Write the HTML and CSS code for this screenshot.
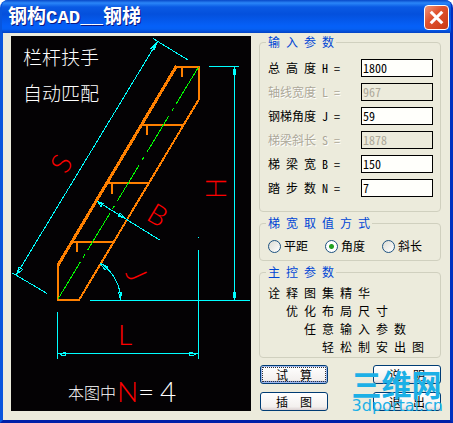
FILE: index.html
```html
<!DOCTYPE html>
<html lang="zh-CN">
<head>
<meta charset="utf-8">
<title>钢构CAD__钢梯</title>
<link rel="stylesheet" href="styles.css">
</head>
<body>
<main class="window">
  <header class="titlebar">
    <h1 class="title">钢构CAD__钢梯</h1>
    <button class="close" type="button" aria-label="关闭">
      <svg viewBox="0 0 22 22" aria-hidden="true"><path d="M5.500 5.500 16.500 16.500M16.500 5.500 5.500 16.500"/></svg>
    </button>
  </header>
  <div class="content">
    <svg class="drawing" viewBox="11 36 240 375" role="img" aria-label="钢梯">
      <g class="steel">
        <path class="thick" d="M57.500 266 176.500 66"/>
        <path d="M176 66.500H198.500V100L79 300H57.500V266"/>
        <path d="M143 125H183M147 125V135M108 183H148M111.500 183V193.500M73 241.500H113M76.500 241.500V252M182 66V77"/>
      </g>
      <path class="axis" d="M198.500 67 58 299"/>
      <g class="dim">
        <path d="M157.500 41.500 16.500 274.500M153 38.500 188 60M12.500 273 47 293.500"/>
        <path d="M157.500 41.500 151 48.500 154 50ZM16.500 274.500 19 267.500 22.500 269.500Z"/>
        <path d="M97.500 201.500 160.500 240.500M97.500 201.500 101 206.500 103.500 203.500ZM125 218.500 118 216 120 213Z"/>
        <path d="M100 263A43 43 0 0 1 120.500 300M100 263 105 270 107.500 267ZM120.500 300 118.500 292.500H121.500Z"/>
        <path d="M90 300.500H250M209 66.500H239M234.500 66V300M233.500 69.500H235.500V74.500H233.500ZM233.500 292.500H235.500V297.500H233.500Z"/>
        <path d="M57.500 312V359M198.500 250V359M198 237.500H199M57 353.500H199M60.500 354.500 63.500 352.500H65.500V355.500H62.500ZM195.500 354.500 192.500 352.500H189.500V355.500H192.500Z"/>
      </g>
      <g class="cjk">
        <text x="23" y="65">栏杆扶手</text>
        <text x="23" y="101">自动匹配</text>
      </g>
      <g class="mark">
        <text transform="translate(66 175) rotate(-59)">S</text>
        <text transform="translate(226 199) rotate(-90)">H</text>
        <text transform="translate(145 219) rotate(31)">B</text>
        <text transform="translate(125 273) rotate(65)">J</text>
        <text x="118" y="345">L</text>
      </g>
      <text class="note" x="68" y="399">本图中</text>
      <text class="formula" x="117" y="402"><tspan class="red">N</tspan><tspan x="138">=</tspan><tspan x="160">4</tspan></text>
    </svg>

    <form class="form">
      <fieldset class="group params">
        <legend>输&ensp;入&ensp;参&ensp;数</legend>
        <div class="row"><label for="h">总&ensp;高&ensp;度&ensp;H&ensp;=</label><input id="h" type="text" value="1800"></div>
        <div class="row"><label class="off" for="l">轴线宽度&ensp;L&ensp;=</label><input id="l" type="text" value="967" disabled></div>
        <div class="row"><label for="j">钢梯角度&ensp;J&ensp;=</label><input id="j" type="text" value="59"></div>
        <div class="row"><label class="off" for="s">梯梁斜长&ensp;S&ensp;=</label><input id="s" type="text" value="1878" disabled></div>
        <div class="row"><label for="b">梯&ensp;梁&ensp;宽&ensp;B&ensp;=</label><input id="b" type="text" value="150"></div>
        <div class="row"><label for="n">踏&ensp;步&ensp;数&ensp;N&ensp;=</label><input id="n" type="text" value="7"></div>
      </fieldset>
      <fieldset class="group modes">
        <legend>梯&ensp;宽&ensp;取&ensp;值&ensp;方&ensp;式</legend>
        <div class="options">
          <label><input type="radio" name="mode">平距</label>
          <label><input type="radio" name="mode" checked>角度</label>
          <label><input type="radio" name="mode">斜长</label>
        </div>
      </fieldset>
      <fieldset class="group about">
        <legend>主&ensp;控&ensp;参&ensp;数</legend>
        <p>诠&ensp;释&ensp;图&ensp;集&ensp;精&ensp;华</p>
        <p class="in1">优&ensp;化&ensp;布&ensp;局&ensp;尺&ensp;寸</p>
        <p class="in2">任&ensp;意&ensp;输&ensp;入&ensp;参&ensp;数</p>
        <p class="in3">轻&ensp;松&ensp;制&ensp;安&ensp;出&ensp;图</p>
      </fieldset>
      <div class="actions">
        <button class="btn default" type="button">试&ensp;&ensp;算</button>
        <button class="btn" type="button">说&ensp;&ensp;明</button>
        <button class="btn" type="button">插&ensp;&ensp;图</button>
        <button class="btn" type="button">退&ensp;&ensp;出</button>
        <div class="watermark"><span class="brand">三维网</span><span class="site">3dportal.cn</span></div>
      </div>
    </form>
  </div>
</main>
</body>
</html>
```
FILE: styles.css
```css
* { box-sizing: border-box; }

body {
  margin: 0;
  background: #fff;
  color: #000;
  font: 12px/12px "Noto Sans CJK SC", sans-serif;
  font-feature-settings: "hwid";
}

.window {
  min-height: 100vh;
  display: flex;
  flex-direction: column;
  border: solid;
  border-width: 0 3px 3px;
  border-color: #0855dd #0030c0 #0020a8 #0855dd;
  border-radius: 8px 8px 0 0;
  background: #0855dd;
}

.titlebar {
  height: 33px;
  display: flex;
  align-items: center;
  justify-content: space-between;
  padding: 2px 2px 0 5px;
  margin: 0 -1px;
  border-radius: 6px 6px 0 0;
  background: linear-gradient(#0848c8 0, #2a86f8 3px, #0a5ae4 7px, #0450dc 14px, #0560f8 26px, #0560f4 29px, #0343c4 33px);
}

.title {
  margin: 0;
  padding-left: 1px;
  color: #fff;
  font: bold 19px/24px "Liberation Mono", "Noto Sans CJK SC", monospace;
  font-feature-settings: normal;
  text-shadow: 1px 1px 0 #0a1883;
}

.close {
  width: 25px;
  height: 25px;
  padding: 0;
  border: 1px solid #fff;
  border-radius: 4px;
  background: linear-gradient(135deg, #f0977c, #e0532f 40%, #c93a14);
}
.close svg { display: block; width: 100%; }
.close path { stroke: #fff; stroke-width: 3; fill: none; }

.content {
  flex: 1;
  display: flex;
  gap: 8px;
  padding: 3px 9px 9px 8px;
  background: #ecebdc;
}

.drawing {
  flex: 1;
  min-width: 0;
  background: #040204;
  font-feature-settings: normal;
}
.drawing path { fill: none; shape-rendering: crispEdges; }
.steel { stroke: #ff8000; stroke-width: 2; }
.steel .thick { stroke-width: 3; }
.axis { stroke: #00ff00; stroke-dasharray: 43 5 4 5; }
.dim { stroke: #00ffff; stroke-width: 1; }
.cjk { fill: #fff; font-size: 19px; font-weight: 300; }
.mark { fill: #f00; font-family: Lato, sans-serif; font-size: 28px; font-weight: 300; }
.note { fill: #fff; font-size: 16px; font-weight: 300; }
.formula { fill: #fff; font-family: Lato, sans-serif; font-size: 28px; font-weight: 300; }
.red { fill: #f00; }

.form {
  width: 182px;
  display: flex;
  flex-direction: column;
  gap: 5px;
}

.group {
  min-width: 0;
  margin: 0;
  border: 1px solid #d0d0bf;
  border-radius: 4px;
}
.group legend {
  margin-left: -2px;
  padding: 0 2px;
  color: #0046d5;
}

.params { padding: 11px 7px 14px 8px; }
.row {
  display: flex;
  align-items: center;
  justify-content: space-between;
  white-space: nowrap;
}
.row + .row { margin-top: 6px; }
.off { color: #aca899; text-shadow: 1px 1px 0 #fff; }
.row input {
  width: 72px;
  height: 18px;
  padding: 0 1px 2px;
  border: 1px solid #000;
  background: #fffffb;
  color: #000;
  font: inherit;
  font-feature-settings: inherit;
}
.row input:disabled { background: #ecebdc; color: #aca899; }

.modes { padding: 10px 1px 7px 8px; }
.options { display: grid; grid-template-columns: repeat(3, 1fr); }
.options label {
  height: 14px;
  display: flex;
  align-items: center;
  gap: 3px;
}
.options input {
  appearance: none;
  width: 13px;
  height: 13px;
  margin: 0;
  border: 1px solid #1d5281;
  border-radius: 50%;
  background: linear-gradient(135deg, #dcdcd4, #fff);
}
.options input:checked {
  background: radial-gradient(circle, #21a121 0 2px, #fff 3px);
}

.about { padding: 6px 0 1px 8px; }
.about p { margin: 0; line-height: 18px; white-space: nowrap; }
.about .in1 { padding-left: 18px; }
.about .in2 { padding-left: 36px; }
.about .in3 { padding-left: 54px; }

.actions {
  position: relative;
  display: grid;
  grid-template-columns: 68px 68px;
  justify-content: space-between;
  gap: 8px;
  margin-top: 2px;
  padding-left: 1px;
}
.btn {
  height: 19px;
  padding: 0;
  border: 1px solid #003c74;
  border-radius: 3px;
  background: linear-gradient(#fff, #f3f0ee 80%, #dcd2d2);
  color: #000;
  font: inherit;
  font-feature-settings: inherit;
}
.default {
  box-shadow: inset 0 0 0 1px #a0b8ee, inset 0 -2px 0 #7a98e0;
  outline: 1px dotted #333;
  outline-offset: -3px;
}

.watermark {
  position: absolute;
  right: -2px;
  top: 3px;
  display: flex;
  flex-direction: column;
  color: #1cb0e6;
  pointer-events: none;
}
.brand { font-size: 30px; line-height: 30px; font-weight: bold; }
.site { font: 16px/16px "DejaVu Sans", sans-serif; font-feature-settings: normal; }
```
